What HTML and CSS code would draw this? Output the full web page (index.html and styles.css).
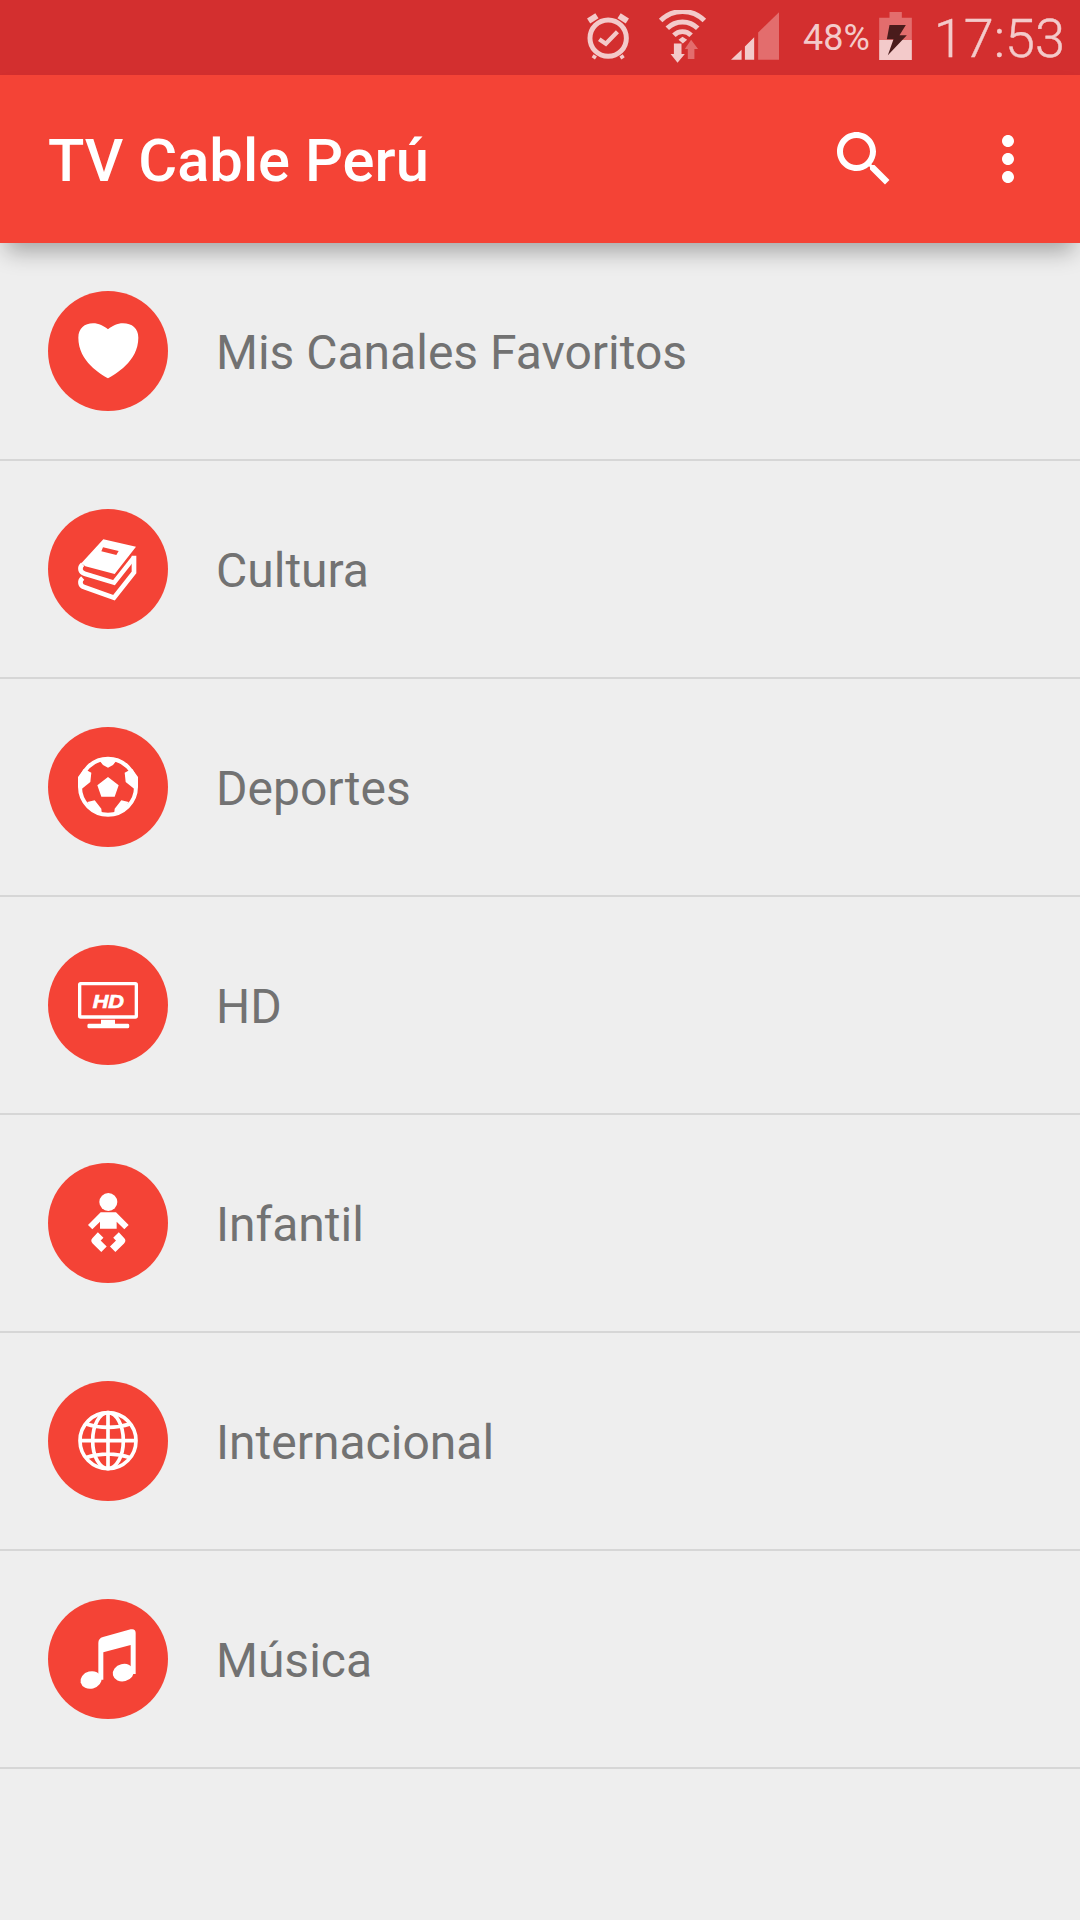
FILE: index.html
```html
<!DOCTYPE html>
<html lang="es">
<head>
<meta charset="utf-8">
<title>TV Cable Perú</title>
<link rel="stylesheet" href="styles.css">
</head>
<body>
<div class="app">
  <header class="top">
    <div class="status">
      <svg class="st st-alarm" viewBox="0 0 133 140"><g class="line-bright"><circle cx="67" cy="75" r="55" stroke-width="15"/><path d="M8 23 33 7" stroke-width="18"/><path d="M125 23 100 7" stroke-width="18"/><path d="M40 78 60 92 95 56" stroke-width="13"/><path d="M28 127 22 136" stroke-width="12"/><path d="M106 127 112 136" stroke-width="12"/></g></svg>
      <svg class="st st-wifi" viewBox="0 0 148 160"><g class="line-bright"><path d="M8 32A93 93 0 0 1 140 32" stroke-width="15"/><path d="M28 55A65 65 0 0 1 120 55" stroke-width="15"/><path d="M48 76A37 37 0 0 1 100 76" stroke-width="15"/></g><path class="fill-bright" d="M62 90 74 81 88 90 75 101ZM48 101H71V133H81L59 159 38 133H48Z"/><path class="fill-dim" d="M100 90 121 118H110V148H90V118H81Z"/></svg>
      <svg class="st st-signal" viewBox="0 0 145 143"><path class="fill-bright" d="M0 143 32 113V143ZM42 143V103L70 75V143Z"/><path class="fill-dim" d="M82 143V61L145 0V143Z"/></svg>
      <span class="pct">48%</span>
      <svg class="st st-batt" viewBox="0 0 98 144"><path class="fill-dim" d="M31 0H68V17H98V84H0V17H31Z"/><path class="fill-bright" d="M0 84H98V144H0Z"/><path class="fill-bolt" d="M31 39H80L61 70H83L26 130 43 82H23Z"/></svg>
      <span class="clock">17:53</span>
    </div>
    <div class="bar">
      <h1 class="title">TV Cable Perú</h1>
      <svg class="act act-search" viewBox="0 0 24 24"><path d="M15.5 14h-.79l-.28-.27C15.41 12.59 16 11.11 16 9.5 16 5.91 13.09 3 9.5 3S3 5.91 3 9.5 5.91 16 9.5 16c1.61 0 3.09-.59 4.23-1.57l.27.28v.79l5 4.99L20.49 19l-4.99-5zm-6 0C7.01 14 5 11.99 5 9.5S7.01 5 9.5 5 14 7.01 14 9.5 11.99 14 9.5 14z"/></svg>
      <svg class="act" viewBox="0 0 24 24"><path d="M12 8c1.1 0 2-.9 2-2s-.9-2-2-2-2 .9-2 2 .9 2 2 2zm0 2c-1.1 0-2 .9-2 2s.9 2 2 2 2-.9 2-2-.9-2-2-2zm0 6c-1.1 0-2 .9-2 2s.9 2 2 2 2-.9 2-2-.9-2-2-2z"/></svg>
    </div>
  </header>
  <ul class="list">
    <li class="row">
      <svg class="badge" viewBox="0 0 360 360"><path class="w" d="M180 262C160 250 91 212 91 140 91 112 110 97 135 97 152 97 168 105 180 115 192 105 208 97 225 97 252 97 271 112 271 140 271 212 200 250 180 262Z"/></svg>
      <span class="label">Mis Canales Favoritos</span>
    </li>
    <li class="row">
      <svg class="badge" viewBox="0 0 360 360"><path class="w" d="M166 91 264 113 200 195 112 172 100 163ZM165 115 160 127 205 138 212 126Z" fill-rule="evenodd"/><path class="s" stroke-width="14" d="M104 166C93 176 96 190 110 194L198 221 258 145"/><path class="s" stroke-width="14" d="M104 207C93 217 96 231 110 235L198 266 258 190V140"/></svg>
      <span class="label">Cultura</span>
    </li>
    <li class="row">
      <svg class="badge" viewBox="0 0 360 360"><circle class="s" cx="180" cy="179" r="84" stroke-width="12"/><path class="w" d="M180 150 212 175 200 209 160 209 148 175ZM150 95 165 114 180 122 195 114 210 95ZM108 125 130 137 127 165 100 187 90 180 90 150ZM252 125 230 137 233 165 260 187 270 180 270 150ZM118 225 140 220 160 245 162 266 135 255ZM242 225 220 220 200 245 198 266 225 255Z"/></svg>
      <span class="label">Deportes</span>
    </li>
    <li class="row">
      <svg class="badge" viewBox="0 0 360 360"><rect class="s" x="95" y="116" width="170" height="100" rx="3" stroke-width="10"/><path class="w" d="M159 224H201V236H240Q244 236 244 243T240 250H122Q118 250 118 243T122 236H159Z"/><text class="hd" x="181" y="188" text-anchor="middle" textLength="94" lengthAdjust="spacingAndGlyphs">HD</text></svg>
      <span class="label">HD</span>
    </li>
    <li class="row">
      <svg class="badge" viewBox="0 0 360 360"><circle class="w" cx="181" cy="117" r="27"/><path class="w" d="M158 148H204L242 186 229 199 206 176V197H156V176L133 199 120 186Z"/><path class="s j" stroke-width="23" d="M158 216 142 233 168 259"/><path class="s j" stroke-width="23" d="M204 216 220 233 194 259"/></svg>
      <span class="label">Infantil</span>
    </li>
    <li class="row">
      <svg class="badge" viewBox="0 0 360 360"><g class="s" stroke-width="11"><circle cx="180" cy="179" r="84"/><ellipse cx="180" cy="179" rx="46" ry="84"/><path d="M180 94V264M95 179H265M112 128Q180 150 248 128M112 230Q180 208 248 230"/></g></svg>
      <span class="label">Internacional</span>
    </li>
    <li class="row">
      <svg class="badge" viewBox="0 0 360 360"><path class="w" d="M151 242V132Q151 118 165 114L248 91Q263 88 263 102V225H248V138L166 160V242Z"/><ellipse class="w" cx="129" cy="243" rx="32" ry="26" transform="rotate(-14 129 243)"/><ellipse class="w" cx="226" cy="221" rx="32" ry="26" transform="rotate(-14 226 221)"/></svg>
      <span class="label">Música</span>
    </li>
  </ul>
</div>
</body>
</html>
```

FILE: styles.css
```css
* { box-sizing: border-box; }
html, body { margin: 0; padding: 0; }
body { font-family: Roboto, "Noto Sans", sans-serif; background: #eeeeee; }
.app { width: 1080px; height: 1920px; overflow: hidden; display: flex; flex-direction: column; background: #eeeeee; }

.top { position: relative; z-index: 1; flex: none; }

.status { height: 75px; background: #d32f2f; display: flex; align-items: center; justify-content: flex-end; padding: 0 15px 3px 0; color: #f3caca; }
.st { display: block; flex: none; }
.st-alarm { width: 44px; height: 47px; margin-right: 28px; }
.st-wifi { width: 49px; height: 53px; margin-right: 24px; }
.st-signal { width: 48px; height: 48px; margin-right: 24px; }
.st-batt { width: 33px; height: 48px; margin-right: 22px; }
.pct { font-size: 36px; line-height: 48px; margin: 3px 9px 0 0; }
.clock { font-size: 54px; font-weight: 300; line-height: 60px; margin-top: 5px; -webkit-text-stroke: 0.4px #f3caca; }
.line-bright { fill: none; stroke: #f3caca; }
.fill-bright { fill: #f3caca; }
.fill-dim { fill: #e36d6d; }
.fill-bolt { fill: #4a1c1c; }

.bar { height: 168px; background: #f44336; display: flex; align-items: center; padding: 0 36px 0 48px; box-shadow: 0 14px 22px -6px rgba(0, 0, 0, 0.32); }
.title { flex: 1; margin: 3px 0 0; font-size: 59.7px; font-weight: 500; color: #ffffff; }
.act { width: 72px; height: 72px; flex: none; fill: #ffffff; }
.act-search { margin-right: 72px; }

.list { list-style: none; margin: 0; padding: 0; }
.row { height: 218px; display: flex; align-items: center; gap: 48px; padding: 0 0 0 48px; border-bottom: 2px solid #d6d6d6; }
.badge { width: 120px; height: 120px; flex: none; border-radius: 50%; background: #f44336; }
.label { font-size: 48px; color: #727272; margin-top: 2px; }
.w { fill: #ffffff; }
.s { fill: none; stroke: #ffffff; }
.j { stroke-linejoin: round; }
.hd { font-family: "Liberation Sans", sans-serif; font-size: 56px; font-weight: 700; font-style: italic; fill: #ffffff; stroke: #ffffff; stroke-width: 2px; }
```
